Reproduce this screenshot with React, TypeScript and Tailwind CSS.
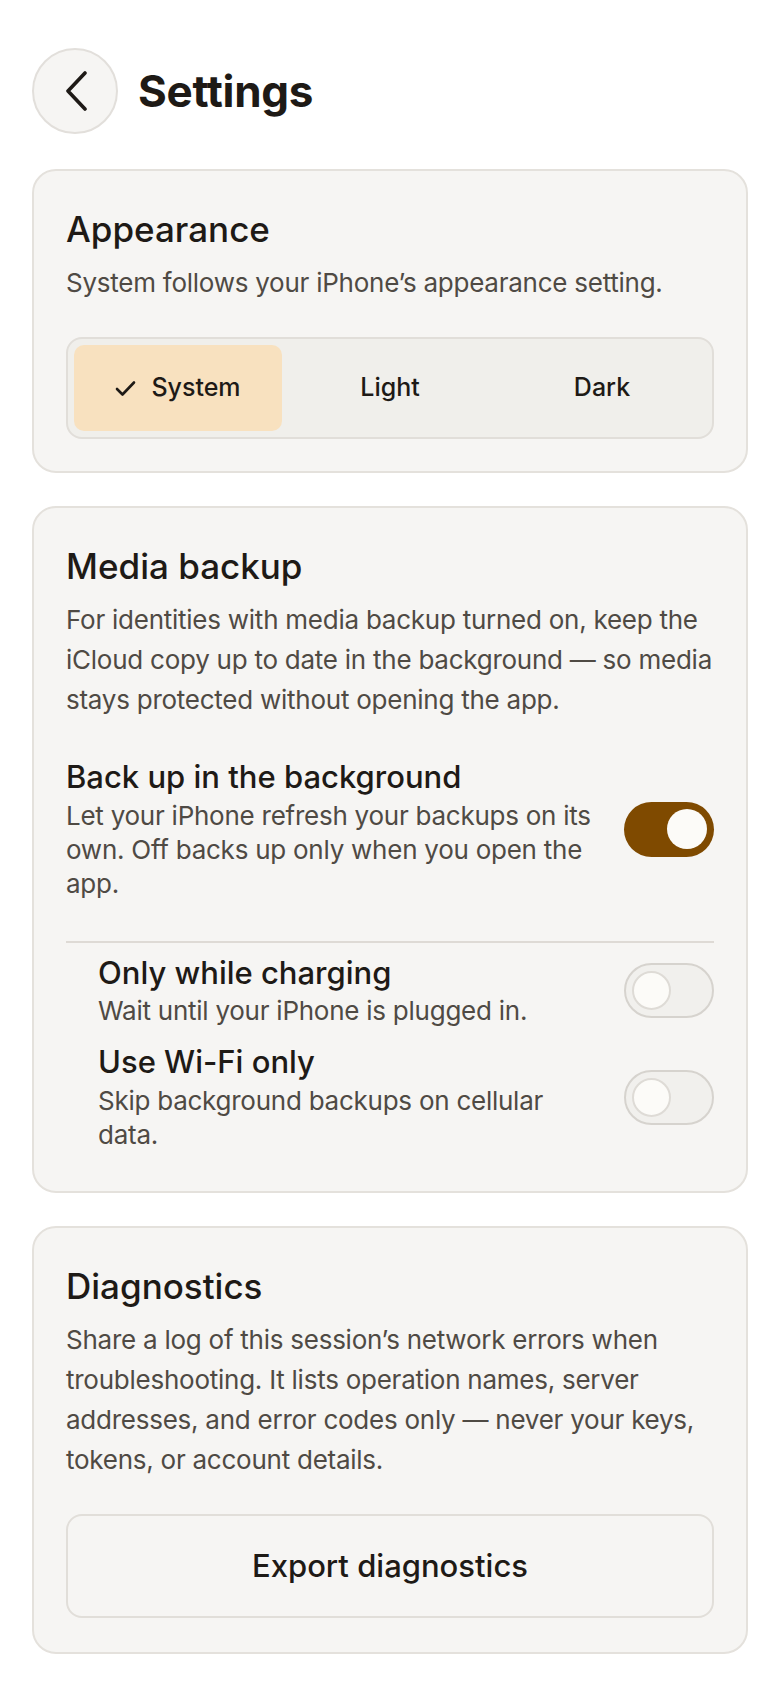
import React, { useState } from "react";

const ink = "text-[#1e1a16]";
const muted = "text-[#4f4a44]";
const body = "text-[26px] tracking-[-0.25px]";

type ToggleProps = { on: boolean; onChange: () => void };

const Toggle = ({ on, onChange }: ToggleProps) => (
  <button
    onClick={onChange}
    className={
      on
        ? "flex h-[55px] w-[90px] shrink-0 items-center justify-end rounded-full bg-[#7f4a00] px-[7px]"
        : "flex h-[55px] w-[90px] shrink-0 items-center justify-start rounded-full border-2 border-[#d6d3ce] bg-[#f1f0ed] px-[6px]"
    }
  >
    <span
      className={
        on
          ? "block h-[40px] w-[40px] rounded-full bg-[#fcfbf8]"
          : "block h-[39px] w-[39px] rounded-full border-2 border-[#dedbd6] bg-[#fcfbf8]"
      }
    />
  </button>
);

const Card = ({ children, className = "" }: { children: React.ReactNode; className?: string }) => (
  <section className={`rounded-[24px] border-2 border-[#e4e1dc] bg-[#f6f5f3] px-[32px] pt-[32px] ${className}`}>
    {children}
  </section>
);

const modes = ["System", "Light", "Dark"];

export default function App() {
  const [mode, setMode] = useState<string>("System");
  const [background, setBackground] = useState<boolean>(true);
  const [charging, setCharging] = useState<boolean>(false);
  const [wifi, setWifi] = useState<boolean>(false);

  return (
    <div
      className="min-h-screen bg-white px-[32px] pt-[48px] pb-[40px]"
      style={{ fontFamily: "Inter, 'Noto Sans', sans-serif" }}
    >
      {/* Header */}
      <header className="flex items-center gap-[20px]">
        <button className="flex h-[86px] w-[86px] items-center justify-center rounded-full border-2 border-[#e2dfdb] bg-[#f6f5f3]">
          <svg width="22" height="40" viewBox="0 0 22 40" fill="none" className="ml-[3px]">
            <path d="M19 2 L2 20 L19 38" stroke="#1e1a16" strokeWidth="3.6" strokeLinecap="round" strokeLinejoin="round" />
          </svg>
        </button>
        <h1 className={`text-[44px] font-bold tracking-[-0.3px] ${ink}`}>Settings</h1>
      </header>

      <div className="mt-[35px] flex flex-col gap-[33px]">
        {/* Appearance */}
        <Card className="pb-[32px]">
          <h2 className={`text-[35px] leading-[52px] font-medium ${ink}`}>Appearance</h2>
          <p className={`mt-[8px] leading-[40px] ${body} ${muted}`}>
            System follows your iPhone’s appearance setting.
          </p>
          <div className="mt-[34px] grid grid-cols-3 gap-[4px] rounded-[16px] border-2 border-[#e1ded9] bg-[#f0efeb] p-[6px]">
            {modes.map((m) => (
              <button
                key={m}
                onClick={() => setMode(m)}
                className={`flex h-[86px] items-center justify-center gap-[15px] rounded-[10px] text-[25px] font-medium ${ink} ${
                  mode === m ? "bg-[#f8e1bf]" : ""
                }`}
              >
                {mode === m && (
                  <svg width="21" height="17" viewBox="0 0 21 17" fill="none">
                    <path d="M2 9 L7.5 14.5 L19 2.5" stroke="#1e1a16" strokeWidth="2.6" strokeLinecap="round" strokeLinejoin="round" />
                  </svg>
                )}
                {m}
              </button>
            ))}
          </div>
        </Card>

        {/* Media backup */}
        <Card className="pb-[39px]">
          <h2 className={`text-[35px] leading-[52px] font-medium ${ink}`}>Media backup</h2>
          <p className={`mt-[8px] leading-[40px] ${body} ${muted}`}>
            For identities with media backup turned on, keep the iCloud copy up to date in the background — so media
            stays protected without opening the app.
          </p>

          <div className="mt-[37px] flex items-center gap-[22px] border-b-2 border-[#dedad5] pb-[40px]">
            <div className="flex-1">
              <h3 className={`text-[31px] leading-[40px] font-medium ${ink}`}>Back up in the background</h3>
              <p className={`mt-[2px] leading-[34px] ${body} ${muted}`}>
                Let your iPhone refresh your backups on its own. Off backs up only when you open the app.
              </p>
            </div>
            <Toggle on={background} onChange={() => setBackground(!background)} />
          </div>

          <div className="mt-[10px] flex items-center gap-[22px] pl-[32px]">
            <div className="flex-1">
              <h3 className={`text-[31px] leading-[40px] font-medium ${ink}`}>Only while charging</h3>
              <p className={`mt-[1px] leading-[34px] ${body} ${muted}`}>Wait until your iPhone is plugged in.</p>
            </div>
            <Toggle on={charging} onChange={() => setCharging(!charging)} />
          </div>

          <div className="mt-[14px] flex items-center gap-[22px] pl-[32px]">
            <div className="flex-1">
              <h3 className={`text-[31px] leading-[40px] font-medium ${ink}`}>Use Wi-Fi only</h3>
              <p className={`mt-[2px] leading-[34px] ${body} ${muted}`}>Skip background backups on cellular data.</p>
            </div>
            <Toggle on={wifi} onChange={() => setWifi(!wifi)} />
          </div>
        </Card>

        {/* Diagnostics */}
        <Card className="pb-[34px]">
          <h2 className={`text-[35px] leading-[52px] font-medium ${ink}`}>Diagnostics</h2>
          <p className={`mt-[8px] leading-[40px] ${body} ${muted}`}>
            Share a log of this session’s network errors when troubleshooting. It lists operation names, server
            addresses, and error codes only — never your keys, tokens, or account details.
          </p>
          <button
            className={`mt-[34px] flex h-[104px] w-full items-center justify-center rounded-[16px] border-2 border-[#e1ded9] text-[31px] font-medium ${ink}`}
          >
            Export diagnostics
          </button>
        </Card>
      </div>
    </div>
  );
}
